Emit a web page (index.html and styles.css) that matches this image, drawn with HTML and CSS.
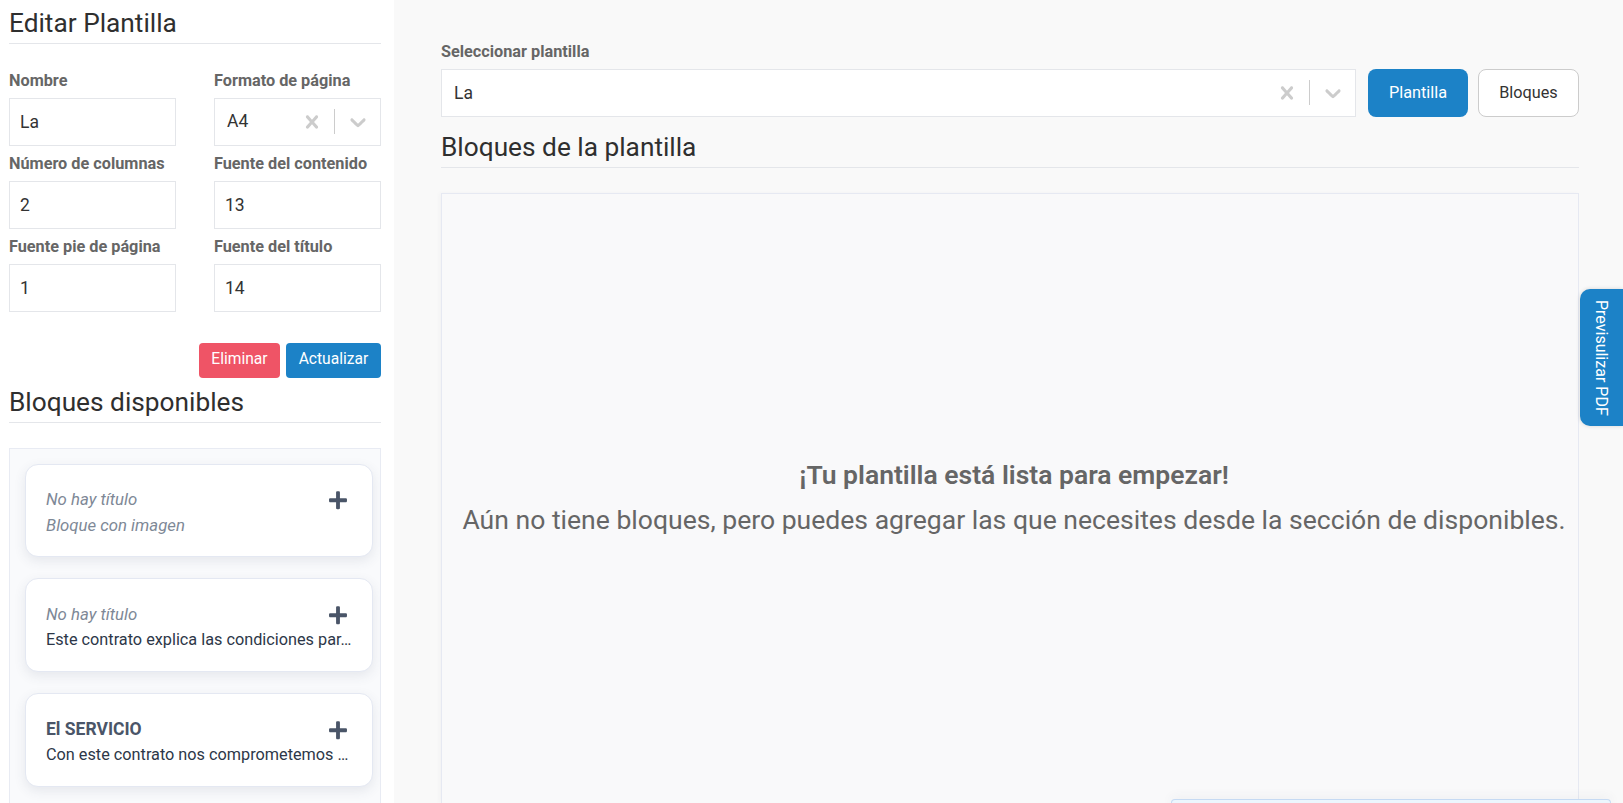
FILE: index.html
```html
<!DOCTYPE html>
<html lang="es">
<head>
<meta charset="utf-8">
<title>Editar Plantilla</title>
<link rel="stylesheet" href="styles.css">
</head>
<body>
<svg class="defs" width="0" height="0" aria-hidden="true">
  <symbol id="i-x" viewBox="0 0 20 20"><path d="M14.348 14.849c-0.469 0.469-1.229 0.469-1.697 0l-2.651-3.030-2.651 3.029c-0.469 0.469-1.229 0.469-1.697 0-0.469-0.469-0.469-1.229 0-1.697l2.758-3.15-2.759-3.152c-0.469-0.469-0.469-1.228 0-1.697s1.228-0.469 1.697 0l2.652 3.031 2.651-3.031c0.469-0.469 1.228-0.469 1.697 0s0.469 1.229 0 1.697l-2.758 3.152 2.758 3.15c0.469 0.469 0.469 1.229 0 1.698z"/></symbol>
  <symbol id="i-chev" viewBox="0 0 20 20"><path d="M4.516 7.548c0.436-0.446 1.043-0.481 1.576 0l3.908 3.747 3.908-3.747c0.533-0.481 1.141-0.446 1.574 0 0.436 0.445 0.408 1.197 0 1.615-0.406 0.418-4.695 4.502-4.695 4.502-0.217 0.223-0.502 0.335-0.787 0.335s-0.57-0.112-0.789-0.335c0 0-4.287-4.084-4.695-4.502s-0.436-1.17 0-1.615z"/></symbol>
  <symbol id="i-plus" viewBox="0 0 448 512"><path d="M416 208H272V64c0-17.67-14.33-32-32-32h-32c-17.67 0-32 14.33-32 32v144H32c-17.67 0-32 14.33-32 32v32c0 17.67 14.33 32 32 32h144v144c0 17.67 14.33 32 32 32h32c17.67 0 32-14.33 32-32V304h144c17.67 0 32-14.33 32-32v-32c0-17.67-14.33-32-32-32z"/></symbol>
</svg>
<div class="app">
  <aside class="side">
    <h2 class="head head-first">Editar Plantilla</h2>
    <div class="form-grid">
      <div class="field"><label class="lbl">Nombre</label><input class="inp" value="La"></div>
      <div class="field"><label class="lbl">Formato de página</label>
        <div class="sel"><span class="sel-val">A4</span>
          <svg class="ic ic-x"><use href="#i-x"/></svg><span class="sel-sep"></span><svg class="ic ic-chev"><use href="#i-chev"/></svg>
        </div>
      </div>
      <div class="field"><label class="lbl">Número de columnas</label><input class="inp" value="2"></div>
      <div class="field"><label class="lbl">Fuente del contenido</label><input class="inp" value="13"></div>
      <div class="field"><label class="lbl">Fuente pie de página</label><input class="inp" value="1"></div>
      <div class="field"><label class="lbl">Fuente del título</label><input class="inp" value="14"></div>
    </div>
    <div class="actions">
      <button class="btn btn-red">Eliminar</button>
      <button class="btn btn-blue">Actualizar</button>
    </div>
    <h2 class="head head-second">Bloques disponibles</h2>
    <div class="avail">
      <div class="card card-image">
        <div class="card-top"><span class="muted">No hay título</span><svg class="plus"><use href="#i-plus"/></svg></div>
        <div class="card-text muted muted-gap">Bloque con imagen</div>
      </div>
      <div class="card">
        <div class="card-top"><span class="muted">No hay título</span><svg class="plus"><use href="#i-plus"/></svg></div>
        <div class="card-text">Este contrato explica las condiciones par…</div>
      </div>
      <div class="card">
        <div class="card-top"><strong class="card-title">El SERVICIO</strong><svg class="plus"><use href="#i-plus"/></svg></div>
        <div class="card-text">Con este contrato nos comprometemos …</div>
      </div>
    </div>
  </aside>
  <main class="main">
    <div class="picker">
      <div class="picker-field">
        <label class="lbl">Seleccionar plantilla</label>
        <div class="sel sel-wide"><span class="sel-val">La</span>
          <svg class="ic ic-x"><use href="#i-x"/></svg><span class="sel-sep"></span><svg class="ic ic-chev"><use href="#i-chev"/></svg>
        </div>
      </div>
      <button class="tab-btn tab-on">Plantilla</button>
      <button class="tab-btn tab-off">Bloques</button>
    </div>
    <h2 class="head head-main">Bloques de la plantilla</h2>
    <div class="canvas">
      <p class="empty-title">¡Tu plantilla está lista para empezar!</p>
      <p class="empty-text">Aún no tiene bloques, pero puedes agregar las que necesites desde la sección de disponibles.</p>
    </div>
  </main>
</div>
<button class="pdf-tab">Previsulizar PDF</button>
<div class="dock"></div>
</body>
</html>
```
FILE: styles.css
```css
* { box-sizing: border-box; }
html, body { margin: 0; height: 100%; overflow: hidden; }
body { font-family: Roboto, "Liberation Sans", sans-serif; color: #333; background: #f9f9f9; position: relative; }
.defs { position: absolute; }
.app { display: flex; height: 803px; overflow: hidden; }

.side { width: 394px; flex: none; background: #fff; padding: 0 13px 0 9px; overflow: hidden; display: flex; flex-direction: column; }
.main { flex: 1; min-width: 0; padding: 41.5px 44px 0 47px; background: #f9f9f9; display: flex; flex-direction: column; }

.head { margin: 0; font-size: 26.25px; font-weight: 400; line-height: 28px; color: #2f2f2f; border-bottom: 1px solid #e4e6ea; }
.head-first { padding: 9px 0 6px; }
.head-second { margin-top: 10.7px; padding-bottom: 6px; }
.head-main { margin-top: 16.1px; padding-bottom: 6.3px; }

.form-grid { display: grid; grid-template-columns: 167px 167px; column-gap: 38px; row-gap: 8px; margin-top: 26.5px; }
.field { display: flex; flex-direction: column; }
.lbl { font-size: 16.25px; font-weight: 700; line-height: 19px; color: #666; margin-bottom: 8.5px; }
.inp { height: 47.5px; width: 100%; border: 1px solid #e4e6ea; background: #fff; padding: 0 10px; font: 17.5px Roboto, sans-serif; color: #333; outline: none; border-radius: 0; }

.sel { display: flex; align-items: center; height: 47.5px; border: 1px solid #e4e6ea; background: #fff; color: #333; font-size: 17.5px; }
.sel-val { flex: 1; padding: 0 0 2px 12px; }
.sel-wide .sel-val { padding-bottom: 0; }
.ic { width: 26px; height: 26px; fill: #cccccc; flex: none; }
.sel-sep { width: 1px; height: 25px; background: #ccc; margin: 0 9.5px; flex: none; }
.ic-chev { margin-right: 9.5px; }

.actions { display: flex; justify-content: flex-end; gap: 6px; margin-top: 31px; }
.btn { height: 35px; border: 0; border-radius: 4px; color: #fff; font: 15.6px Roboto, sans-serif; padding: 0 0 2px; }
.btn-red { background: #ef5466; width: 81px; }
.btn-blue { background: #1c82c7; width: 95px; }

.avail { flex: 1; margin-top: 25px; background: #f9fafc; border: 1px solid #e8ebf3; border-bottom: 0; padding: 14.7px 7px 0 15px; overflow: hidden; }
.card { background: #fff; border: 1px solid #e4e8f2; border-radius: 13px; height: 93.7px; padding: 25px 20px 0 20px; margin-bottom: 21.3px; box-shadow: 0 4px 12px rgba(60, 70, 100, .1); }
.card-image { height: 93.4px; margin-bottom: 21px; padding-top: 24.4px; }
.card-top { display: flex; align-items: center; justify-content: space-between; height: 20px; }
.muted { color: #7e8896; font-style: italic; font-size: 16.75px; }
.muted-gap { margin-top: 7.7px; }
.card-text { font-size: 16.25px; line-height: 20px; color: #2d3748; white-space: nowrap; margin-top: 6px; }
.card-text.muted { color: #7e8896; font-size: 16.75px; }
.card-title { font-size: 17.5px; font-weight: 700; color: #4a5568; }
.plus { width: 18px; height: 20.5px; fill: #4a5568; flex: none; margin-right: 5.5px; position: relative; top: 0.5px; }

.picker { display: flex; align-items: flex-end; }
.picker-field { flex: 1; min-width: 0; display: flex; flex-direction: column; }
.tab-btn { height: 47.5px; font: 16.25px Roboto, sans-serif; border-radius: 8px; padding: 0; }
.tab-on { width: 100px; margin-left: 12px; border: 0; background: #1c82c7; color: #fff; }
.tab-off { width: 101px; margin-left: 10px; border: 1px solid #ccc; background: #fff; color: #333; }

.canvas { flex: 1; margin-top: 25.5px; background: #f9f9fa; border: 1px solid #e6e9f2; border-bottom: 0; padding: 264px 0 0 8px; text-align: center; box-shadow: -2px 0 4px rgba(60, 70, 100, .03); overflow: hidden; }
.empty-title { margin: 0; font-size: 26.5px; font-weight: 600; line-height: 34px; color: #666; }
.empty-text { margin: 11px 0 0; font-size: 26.55px; font-weight: 400; line-height: 34px; color: #666; white-space: nowrap; }

.pdf-tab { position: absolute; right: 0; top: 289px; width: 43px; height: 137px; border: 0; padding: 0; background: #1c82c7; color: #fff; font: 16px Roboto, sans-serif; writing-mode: vertical-rl; border-radius: 10px 0 0 10px; box-shadow: 0 0 4px rgba(0, 0, 0, .15); }
.dock { position: absolute; left: 1171px; bottom: 0; width: 440px; height: 4px; background: #ecf6fd; border: 1px solid #c6daf3; border-bottom: 0; border-radius: 8px 8px 0 0; box-shadow: 0 0 12px rgba(60, 70, 100, .12); }
```
